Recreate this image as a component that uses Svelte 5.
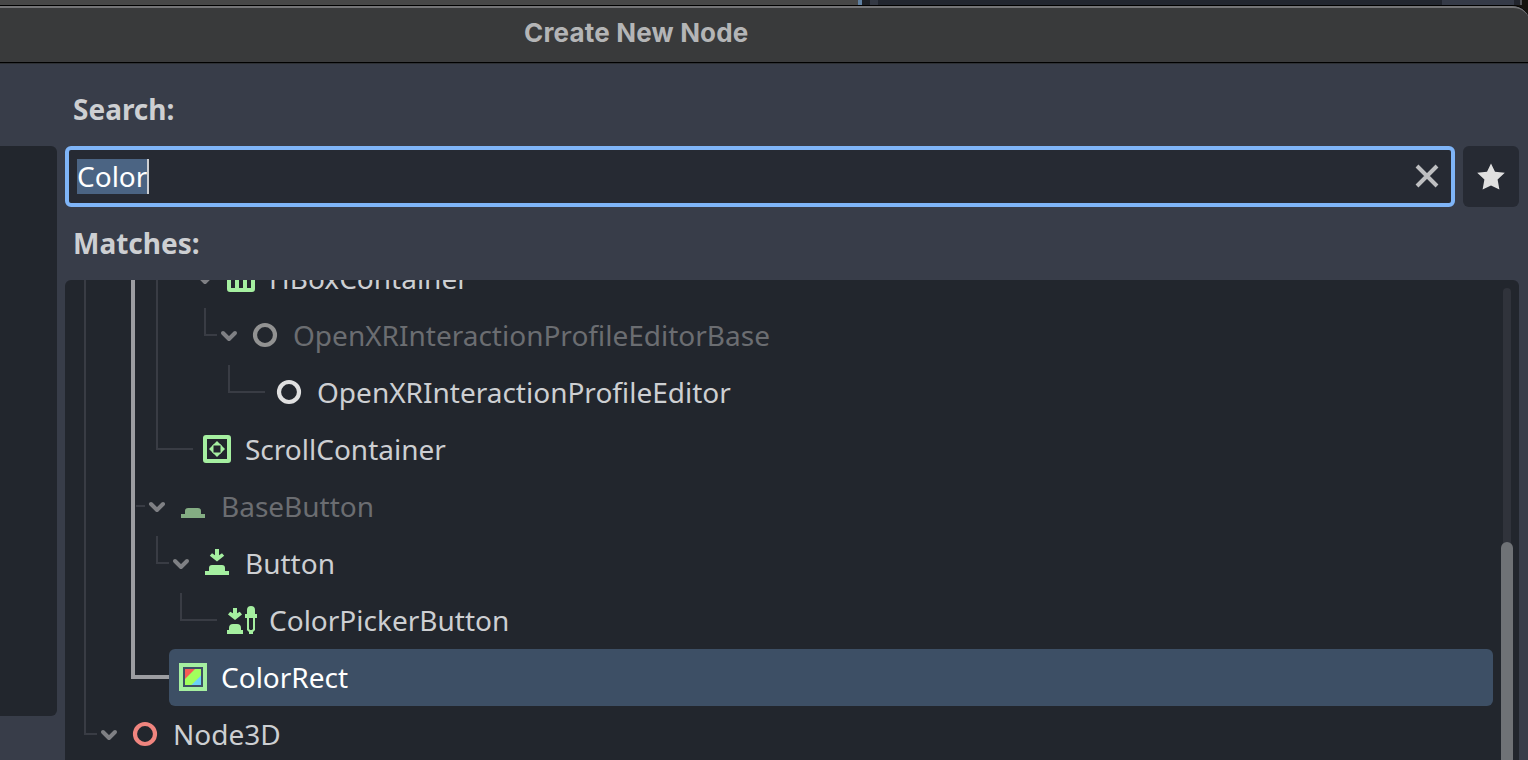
<script>
  const rows = [
    { name: 'HBoxContainer', icon: 'hbox', indent: 4, arrow: true },
    { name: 'OpenXRInteractionProfileEditorBase', icon: 'ringDim', indent: 5, arrow: true, dim: true },
    { name: 'OpenXRInteractionProfileEditor', icon: 'ring', indent: 6 },
    { name: 'ScrollContainer', icon: 'scroll', indent: 3 },
    { name: 'BaseButton', icon: 'baseButton', indent: 2, arrow: true, dim: true },
    { name: 'Button', icon: 'button', indent: 3, arrow: true },
    { name: 'ColorPickerButton', icon: 'picker', indent: 4 },
    { name: 'ColorRect', icon: 'colorRect', indent: 2, selected: true },
    { name: 'Node3D', icon: 'ringRed', indent: 0, arrow: true }
  ];
</script>

<div class="screen">
  <div class="behind"><i class="b1"></i><i class="b2"></i><i class="b3"></i><i class="b4"></i><i class="b5"></i><i class="b6"></i><i class="b7"></i><i class="b8"></i></div>
  <div class="window">
    <header><span>Create New Node</span></header>
    <div class="content">
      <aside></aside>
      <main>
        <h2>Search:</h2>
        <div class="searchbar">
          <div class="field">
            <span class="sel">Color</span><i class="caret"></i>
            <svg class="clear" width="32" height="32" viewBox="0 0 32 32"><path d="M6 6 26 26M26 6 6 26" fill="none" stroke="#bebfc1" stroke-width="4" /></svg>
          </div>
          <div class="fav">
            <svg width="32" height="32" viewBox="0 0 16 16"><path fill="#e0e0e0" d="M8 1.700 6 5.900l-4.900.5 3.600 3.300L3.800 14.700 8 12.700l4.200 2-.9-5 3.600-3.300-4.900-.5z" /></svg>
          </div>
        </div>
        <h2 class="second">Matches:</h2>
        <div class="tree">
          <div class="rows">
            {#each rows as row}
              <div class="row" class:dim={row.dim} style="padding-left: {row.indent * 24 + 32}px">
                <span class="arrow">
                  {#if row.arrow}
                    <svg width="24" height="24" viewBox="0 0 12 12"><path d="m3 5 3 3 3-3" fill="none" stroke="#7f8084" stroke-width="2" stroke-linecap="round" stroke-linejoin="round" /></svg>
                  {/if}
                </span>
                <div class="item" class:selected={row.selected}>
                  <svg width="32" height="32" viewBox="0 0 16 16" fill="#a5efa0">
                    {#if row.icon === 'hbox'}
                      <path fill-rule="evenodd" d="M2.500 1h11a1.500 1.500 0 0 1 1.500 1.500v11a1.500 1.500 0 0 1-1.500 1.500h-11a1.500 1.500 0 0 1-1.500-1.500v-11a1.500 1.500 0 0 1 1.500-1.500zM3 3v10h2V3zm4 0v10h2V3zm4 0v10h2V3z" />
                    {:else if row.icon === 'ring' || row.icon === 'ringDim' || row.icon === 'ringRed'}
                      <circle cx="8" cy="8" r="5" fill="none" stroke={row.icon === 'ring' ? '#e0e0e0' : row.icon === 'ringRed' ? '#f0857f' : '#929292'} stroke-width="2.100" />
                    {:else if row.icon === 'scroll'}
                      <path fill-rule="evenodd" d="M2.500 1h11a1.500 1.500 0 0 1 1.500 1.500v11a1.500 1.500 0 0 1-1.500 1.500h-11a1.500 1.500 0 0 1-1.500-1.500v-11a1.500 1.500 0 0 1 1.500-1.500zM3 3v10h10V3z" />
                      <path d="M8 4 6 6h4zM6 6 4 8l2 2zm4 0v4l2-2zm-4 4 2 2 2-2z" />
                      <path d="M6 6h4v4H6z" fill="none" stroke="#a5efa0" stroke-width=".5" />
                    {:else if row.icon === 'baseButton'}
                      <path fill="#84ad83" d="M2 14v-2h2v-1.500A1.500 1.500 0 0 1 5.500 9h5a1.500 1.500 0 0 1 1.500 1.500V12h2v2z" />
                    {:else if row.icon === 'button'}
                      <path d="M2 14v-2h2v-1.500A1.500 1.500 0 0 1 5.500 9h5a1.500 1.500 0 0 1 1.500 1.500V12h2v2z" />
                      <path d="M7 1v3.100L5.500 3.100 4.400 4.400 8 7.200l3.600-2.800-1.100-1.300L9 4.100V1z" />
                    {:else if row.icon === 'picker'}
                      <path d="M1 15v-2h1v-1a2 2 0 0 1 2-2h2a2 2 0 0 1 2 2v1h1v2z" />
                      <path d="M4 2v2.600L2.600 3.900 1.500 5.200 5 8l3.500-2.800-1.100-1.300L6 4.600V2z" />
                      <path fill-rule="evenodd" d="M13 1a2 2 0 0 0-2 2v2h-1v2h1v6l1 1v1h2v-1l1-1V7h1V5h-1V3a2 2 0 0 0-2-2zm-1 6h2v5.500l-.5.500h-1l-.5-.500z" />
                    {:else if row.icon === 'colorRect'}
                      <path fill-rule="evenodd" d="M1 1h14v14H1zm2 2v10h10V3z" />
                      <path fill="#a2ff5c" d="M4 4h8v8H4z" />
                      <path fill="#f65a55" d="M4 4h5L4 9z" />
                      <path fill="#6cd2f8" d="M12 7.200V12H7.200z" />
                    {/if}
                  </svg>
                  <span class="name">{row.name}</span>
                </div>
              </div>
            {/each}
          </div>
          <svg class="guides" width="200" height="480" viewBox="65 280 200 480" fill="none">
            <g stroke="#393c44" stroke-width="2">
              <path d="M85 280V734H97M157 280V449H193M136 506H145" />
              <path d="M205 308V335H217M229 365V392H265M157 536V563H169M181 593V620H217" />
            </g>
            <path d="M133 280V677H169" stroke="#9c9da1" stroke-width="4" />
          </svg>
          <div class="track"><div class="thumb"></div></div>
        </div>
      </main>
    </div>
  </div>
</div>

<style>
  .screen { width: 1528px; height: 760px; overflow: hidden; background: #16140f; font-family: 'Noto Sans', sans-serif; font-size: 28px; display: flex; flex-direction: column; }
  .behind { height: 5px; flex: none; display: flex; }
  .behind i { height: 5px; }
  .b1 { width: 858px; background: #474747; }
  .b2 { width: 4px; background: #5f7f9f; }
  .b3 { width: 8px; background: #1c1f25; }
  .b4 { width: 8px; background: #343944; }
  .b5 { width: 564px; background: #22262f; }
  .b6 { width: 72px; background: #353a47; }
  .b7 { width: 6px; background: #22252d; }
  .b8 { width: 2px; background: #55565a; }
  .window { flex: 1; min-height: 0; box-sizing: border-box; width: 1530px; border-top: 1px solid #000; border-radius: 0 18px 0 0; display: flex; flex-direction: column; overflow: hidden; background: #383d49; }
  header { box-sizing: border-box; height: 58px; flex: none; border-top: 2px solid #747476; border-radius: 0 17px 0 0; border-bottom: 1px solid #2d3034; background: #393a3b; box-shadow: inset 0 -1px #000; display: flex; }
  header span { margin: 8px 0 0 524px; font: 700 26px/34px Inter, sans-serif; letter-spacing: 0.18px; color: #b4b5b6; white-space: nowrap; }
  .content { flex: 1; min-height: 0; display: flex; }
  aside { width: 57px; height: 570px; margin-top: 82px; background: #22262d; border-radius: 0 6px 6px 0; flex: none; }
  main { margin-left: 8px; width: 1454px; display: flex; flex-direction: column; }
  h2 { margin: 25px 0 0 8px; height: 40px; line-height: 40px; font-size: 28px; font-weight: 700; color: #cdcfd2; }
  h2.second { margin-top: 16px; }
  .searchbar { display: flex; gap: 8px; margin-top: 17px; height: 61px; flex: none; }
  .field { box-sizing: border-box; width: 1390px; border: 4px solid #7fb5f8; border-radius: 6px; background: #262a33; display: flex; align-items: center; padding-left: 8px; }
  .sel { background: #4b6483; color: #fff; height: 35px; line-height: 35px; width: 70px; }
  .caret { width: 2px; height: 35px; background: #cdcfd2; }
  .clear { margin: 0 8px 1px auto; }
  .fav { width: 56px; background: #262a33; border-radius: 6px; display: flex; align-items: center; justify-content: center; }
  .fav svg { margin-bottom: 1px; }
  .tree { position: relative; height: 480px; flex: none; margin-top: 17px; background: #22262d; border-radius: 6px 6px 0 0; overflow: hidden; }
  .rows { margin-top: -30px; width: 1428px; }
  .row { box-sizing: border-box; height: 57px; display: flex; align-items: stretch; }
  .arrow { width: 24px; flex: none; padding-top: 16px; }
  .arrow svg { display: block; }
  .item { flex: 1; display: flex; padding: 12px 0 0 8px; border-radius: 6px; color: #cdcfd2; }
  .item svg { flex: none; }
  .item.selected { background: #3d4f65; color: #fff; }
  .dim .item { color: #6b6d71; }
  .name { margin: -3px 0 0 12px; line-height: 38px; white-space: nowrap; }
  .guides { position: absolute; left: 0; top: 0; }
  .track { position: absolute; right: 8px; top: 8px; width: 8px; height: 480px; border-radius: 4px; background: #30333b; }
  .thumb { position: absolute; left: -2px; top: 254px; width: 12px; height: 260px; border-radius: 6px; background: #6f7276; }
</style>
